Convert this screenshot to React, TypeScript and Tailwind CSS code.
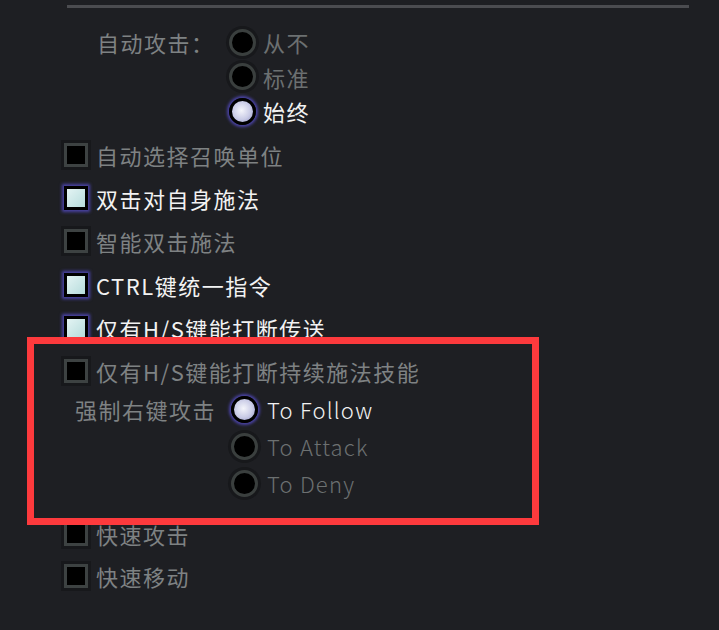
import React from 'react';

const font = { fontFamily: '"Noto Sans CJK SC", "Noto Sans", sans-serif' };

const Checkbox = ({ checked }: { checked: boolean }) =>
  checked ? (
    <div className="w-[24px] h-[24px] shrink-0 border-[3px] border-black bg-gradient-to-br from-[#e4f4f4] to-[#b6dcdc] shadow-[0_0_3px_2px_#4a43a6]" />
  ) : (
    <div className="w-[24px] h-[24px] shrink-0 border-[3px] border-[#3d4242] bg-black shadow-[0_0_0_3px_#17181b]" />
  );

const Radio = ({ checked }: { checked: boolean }) =>
  checked ? (
    <div className="w-[27px] h-[27px] shrink-0 rounded-full border-[3px] border-black bg-[radial-gradient(circle_at_45%_45%,#f4f5fb_0%,#c9cbe6_55%,#8f92c4_100%)] shadow-[0_0_3px_2px_#4a43a6]" />
  ) : (
    <div className="w-[27px] h-[27px] shrink-0 rounded-full border-[3px] border-[#3a3f3e] bg-black shadow-[0_0_0_3px_#17181b]" />
  );

const CheckRow = ({ label, checked, h }: { label: string; checked: boolean; h: string }) => (
  <div className={`flex items-center gap-[8px] pl-[64px] ${h}`}>
    <Checkbox checked={checked} />
    <span className={`text-[22px] leading-none tracking-[1.5px] ${checked ? 'text-[#f2f2f2]' : 'text-[#7e8283]'}`}>{label}</span>
  </div>
);

const RadioRow = ({ label, checked, latin }: { label: string; checked: boolean; latin?: boolean }) => (
  <div className="flex items-center gap-[7px] h-full">
    <Radio checked={checked} />
    <span
      className={`text-[22px] leading-none ${latin ? 'ml-[2px] tracking-[1.2px] font-light' : 'tracking-[1.5px]'} ${checked ? 'text-[#f2f2f2]' : 'text-[#6c7071]'}`}
    >
      {label}
    </span>
  </div>
);

const App = () => {
  const checks = [
    { label: '自动选择召唤单位', checked: false },
    { label: '双击对自身施法', checked: true },
    { label: '智能双击施法', checked: false },
    { label: 'CTRL键统一指令', checked: true },
    { label: '仅有H/S键能打断传送', checked: true },
    { label: '仅有H/S键能打断持续施法技能', checked: false },
  ];

  return (
    <div className="relative w-[719px] h-[630px] overflow-hidden bg-[#1e1f23]" style={font}>
      <div className="ml-[67px] mt-[5px] w-[622px] h-[3px] bg-[#4b4c50]" />

      {/* auto attack */}
      <div className="flex mt-[17px]">
        <div className="w-[229px] pl-[97px] h-[34.5px] flex items-center">
          <span className="text-[22px] leading-none tracking-[1.5px] text-[#7e8283]">自动攻击：</span>
        </div>
        <div className="flex flex-col">
          {[
            { label: '从不', checked: false },
            { label: '标准', checked: false },
            { label: '始终', checked: true },
          ].map((r) => (
            <div key={r.label} className="h-[34.5px]">
              <RadioRow label={r.label} checked={r.checked} />
            </div>
          ))}
        </div>
      </div>

      <div className="mt-[5px] flex flex-col">
        {checks.map((c) => (
          <CheckRow key={c.label} label={c.label} checked={c.checked} h="h-[43.2px]" />
        ))}
      </div>

      {/* right click */}
      <div className="flex mt-[-2px]">
        <div className="w-[231px] pl-[75px] h-[37px] flex items-center">
          <span className="text-[22px] leading-none tracking-[1.5px] text-[#7e8283]">强制右键攻击</span>
        </div>
        <div className="flex flex-col">
          {[
            { label: 'To Follow', checked: true },
            { label: 'To Attack', checked: false },
            { label: 'To Deny', checked: false },
          ].map((r) => (
            <div key={r.label} className="h-[37px]">
              <RadioRow label={r.label} checked={r.checked} latin />
            </div>
          ))}
        </div>
      </div>

      <div className="mt-[11px] flex flex-col">
        <CheckRow label="快速攻击" checked={false} h="h-[42px]" />
        <CheckRow label="快速移动" checked={false} h="h-[42px]" />
      </div>

      <div className="absolute left-[27px] top-[337px] w-[512px] h-[188px] border-[7px] border-[#fd3a3d]" />
    </div>
  );
};

export default App;
